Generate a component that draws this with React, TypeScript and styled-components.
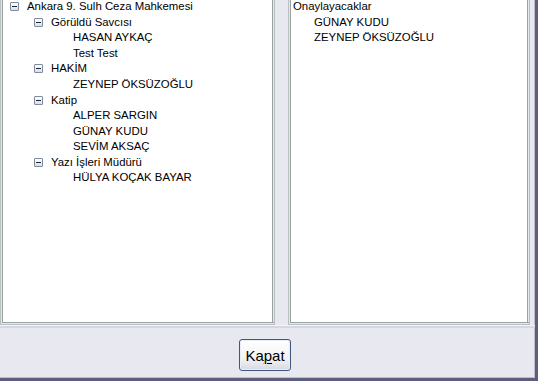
import React from 'react';
import styled, { createGlobalStyle } from 'styled-components';

const GlobalStyle = createGlobalStyle`
  html, body {
    margin: 0;
    padding: 0;
    background: #e8e8f1;
  }
  body {
    font-family: "Liberation Sans", Arial, sans-serif;
    font-size: 11.4px;
    color: #000;
  }
`;

const Window = styled.div`
  width: 538px;
  height: 381px;
  box-sizing: border-box;
  display: flex;
  flex-direction: column;
  background: #e8e8f1;
  border-right: 3px solid #5e5d7c;
  border-bottom: 3px solid #5e5d7c;
  box-shadow: inset -1px -1px 0 #bdbdcc;
  overflow: hidden;
`;

const Panels = styled.div`
  display: flex;
  gap: 13px;
  height: 325px;
`;

const Panel = styled.div<{ $width: number }>`
  width: ${({ $width }) => $width}px;
  box-sizing: border-box;
  height: 100%;
  background: #fff;
  border: 1px solid #b9c0bf;
  border-top: none;
  box-shadow: inset 1px -1px 0 #e4e8e7, inset 2px -2px 0 #9aa3a2, inset -1px 0 0 #e4e8e7, inset -2px 0 0 #9aa3a2;
  overflow: hidden;
`;

const Row = styled.div<{ $indent: number }>`
  display: flex;
  align-items: center;
  height: 15.55px;
  padding-left: ${({ $indent }) => $indent}px;
  white-space: nowrap;
  line-height: 15px;
  &:first-child {
    margin-top: -1px;
  }
`;

const Toggle = styled.span`
  width: 9px;
  height: 9px;
  box-sizing: border-box;
  border: 1px solid #7d8b9c;
  border-radius: 1px;
  background: linear-gradient(#ffffff, #d9dee7);
  margin-right: 8px;
  position: relative;
  flex: none;
  &::after {
    content: '';
    position: absolute;
    left: 1px;
    right: 1px;
    top: 3px;
    height: 1px;
    background: #1f2836;
  }
`;

const Footer = styled.div`
  flex: 1;
  display: flex;
  justify-content: center;
  align-items: flex-start;
  padding-top: 13px;
  border-top: 1px solid #f4f4f9;
  box-shadow: inset 0 2px 0 #d6d6e0;
`;

const Button = styled.button`
  width: 52px;
  height: 32px;
  padding: 0;
  margin-left: -5px;
  border: 1px solid #3c5880;
  border-radius: 3px;
  background: linear-gradient(#ffffff 0%, #f3f3f6 60%, #d8d8e2 100%);
  box-shadow: inset 0 0 0 1px #e9edf5;
  font-family: "Liberation Sans", Arial, sans-serif;
  font-size: 15px;
  color: #000;
  cursor: pointer;
  u {
    text-decoration-thickness: 1px;
    text-underline-offset: 2px;
  }
`;

type TreeNode = { label: string; children?: TreeNode[] };

const tree: TreeNode[] = [
  {
    label: 'Ankara 9. Sulh Ceza Mahkemesi',
    children: [
      { label: 'Görüldü Savcısı', children: [{ label: 'HASAN AYKAÇ' }, { label: 'Test Test' }] },
      { label: 'HAKİM', children: [{ label: 'ZEYNEP ÖKSÜZOĞLU' }] },
      {
        label: 'Katip',
        children: [{ label: 'ALPER SARGIN' }, { label: 'GÜNAY KUDU' }, { label: 'SEVİM AKSAÇ' }],
      },
      { label: 'Yazı İşleri Müdürü', children: [{ label: 'HÜLYA KOÇAK BAYAR' }] },
    ],
  },
];

const flatten = (nodes: TreeNode[], depth: number): React.ReactNode[] =>
  nodes.flatMap((n) => {
    const hasKids = !!n.children;
    const row = (
      <Row key={`${depth}-${n.label}`} $indent={hasKids ? 9 + depth * 24 : 72 + (depth - 2) * 24}>
        {hasKids && <Toggle />}
        {n.label}
      </Row>
    );
    return [row, ...(n.children ? flatten(n.children, depth + 1) : [])];
  });

export default function App() {
  return (
    <>
      <GlobalStyle />
      <Window>
        <Panels>
          <Panel $width={275}>{flatten(tree, 0)}</Panel>
          <Panel $width={242}>
            <Row $indent={4}>Onaylayacaklar</Row>
            <Row $indent={25}>GÜNAY KUDU</Row>
            <Row $indent={25}>ZEYNEP ÖKSÜZOĞLU</Row>
          </Panel>
        </Panels>
        <Footer>
          <Button>
            Ka<u>p</u>at
          </Button>
        </Footer>
      </Window>
    </>
  );
}
